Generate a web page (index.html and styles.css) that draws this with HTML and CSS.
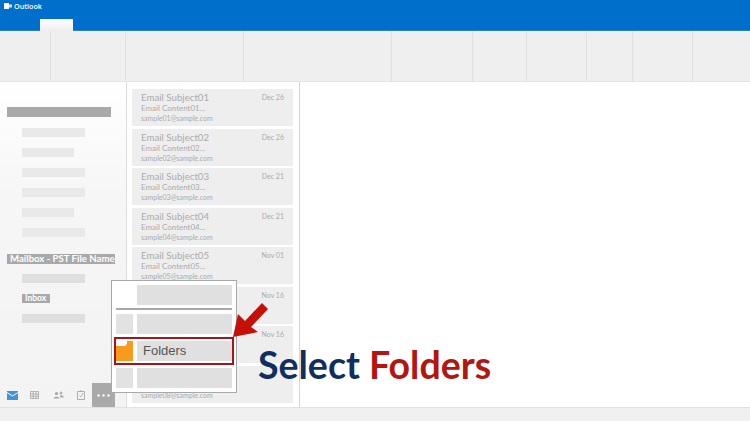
FILE: index.html
```html
<!DOCTYPE html>
<html lang="en">

<head>
    <meta charset="UTF-8">
    <title>Outlook - Select Folders</title>
    <link rel="stylesheet" href="styles.css">
</head>

<body>
    <div class="app">
        <header class="topbar">
            <div class="brand">
                <svg class="brand-icon" width="8" height="8" viewBox="0 0 8 8">
                    <rect x="0" y="1" width="5" height="6" fill="#fff" />
                    <rect x="5" y="2.5" width="3" height="3" fill="#cfe3f5" />
                </svg>
                <span>Outlook</span>
            </div>
            <div class="tab"></div>
        </header>

        <div class="ribbon">
            <div class="ribbon-group w50"></div>
            <div class="ribbon-group w75"></div>
            <div class="ribbon-group w118"></div>
            <div class="ribbon-group w148"></div>
            <div class="ribbon-group w81"></div>
            <div class="ribbon-group w54"></div>
            <div class="ribbon-group w61"></div>
            <div class="ribbon-group w46"></div>
            <div class="ribbon-group w61"></div>
        </div>

        <main class="main">
            <aside class="sidebar">
                <div class="side-list">
                    <div class="side-head"></div>
                    <div class="side-item"></div>
                    <div class="side-item short"></div>
                    <div class="side-item"></div>
                    <div class="side-item"></div>
                    <div class="side-item short"></div>
                    <div class="side-item"></div>
                    <div class="side-label">Mailbox - PST File Name</div>
                    <div class="side-item dark"></div>
                    <div class="side-inbox">Inbox</div>
                    <div class="side-item dark"></div>
                </div>
                <nav class="side-nav">
                    <svg class="nav-icon" width="11" height="9" viewBox="0 0 11 9">
                        <rect width="11" height="9" fill="#3f94dc" />
                        <path d="M0 1.5 L5.5 5 L11 1.5" fill="none" stroke="#fff" stroke-width="1" />
                    </svg>
                    <svg class="nav-icon" width="9" height="8" viewBox="0 0 9 8">
                        <path d="M0.5 0.5H8.5V7.5H0.5ZM0 3H9M0 5.2H9M3.2 1V8M6 1V8" fill="none" stroke="#a5a5a5" stroke-width="0.8" />
                    </svg>
                    <svg class="nav-icon" width="11" height="8" viewBox="0 0 11 8">
                        <circle cx="3.5" cy="2.5" r="1.6" fill="#a5a5a5" />
                        <circle cx="8" cy="2" r="1.5" fill="#b5b5b5" />
                        <path d="M0.5 7.5C0.8 5 6.2 5 6.5 7.5ZM7 4.5C8.5 4 10.5 4.5 10.8 6.5H7.5Z" fill="#a5a5a5" />
                    </svg>
                    <svg class="nav-icon" width="8" height="10" viewBox="0 0 8 10">
                        <path d="M0.5 1.5H7.5V9.5H0.5Z" fill="none" stroke="#a5a5a5" stroke-width="0.9" />
                        <path d="M2.5 5.5L3.7 6.8L6.2 3M3 1H5" fill="none" stroke="#a5a5a5" stroke-width="0.9" />
                    </svg>
                    <div class="nav-more">
                        <svg width="13" height="3" viewBox="0 0 13 3">
                            <circle cx="1.5" cy="1.5" r="1.2" fill="#fff" />
                            <circle cx="6.5" cy="1.5" r="1.2" fill="#fff" />
                            <circle cx="11.5" cy="1.5" r="1.2" fill="#fff" />
                        </svg>
                    </div>
                </nav>
            </aside>

            <section class="mail-list">
                <div class="mail-card">
                    <div class="mail-top"><span class="subject">Email Subject01</span><span class="date">Dec 26</span></div>
                    <div class="content">Email Content01...</div>
                    <div class="sender">sample01@sample.com</div>
                </div>
                <div class="mail-card">
                    <div class="mail-top"><span class="subject">Email Subject02</span><span class="date">Dec 26</span></div>
                    <div class="content">Email Content02...</div>
                    <div class="sender">sample02@sample.com</div>
                </div>
                <div class="mail-card">
                    <div class="mail-top"><span class="subject">Email Subject03</span><span class="date">Dec 21</span></div>
                    <div class="content">Email Content03...</div>
                    <div class="sender">sample03@sample.com</div>
                </div>
                <div class="mail-card">
                    <div class="mail-top"><span class="subject">Email Subject04</span><span class="date">Dec 21</span></div>
                    <div class="content">Email Content04...</div>
                    <div class="sender">sample04@sample.com</div>
                </div>
                <div class="mail-card">
                    <div class="mail-top"><span class="subject">Email Subject05</span><span class="date">Nov 01</span></div>
                    <div class="content">Email Content05...</div>
                    <div class="sender">sample05@sample.com</div>
                </div>
                <div class="mail-card">
                    <div class="mail-top"><span class="subject"></span><span class="date">Nov 16</span></div>
                </div>
                <div class="mail-card">
                    <div class="mail-top"><span class="subject"></span><span class="date">Nov 16</span></div>
                </div>
                <div class="mail-card last">
                    <div class="sender">sample08@sample.com</div>
                </div>
            </section>

            <section class="reading"></section>
        </main>

        <footer class="statusbar"></footer>

        <!-- popup menu over the sidebar and list -->
        <div class="popup">
            <div class="popup-row first">
                <div class="popup-icon blank"></div>
                <div class="popup-text"></div>
            </div>
            <div class="popup-line"></div>
            <div class="popup-row">
                <div class="popup-icon"></div>
                <div class="popup-text"></div>
            </div>
            <div class="popup-row selected">
                <svg class="folder-icon" width="17" height="20" viewBox="0 0 17 20">
                    <path d="M0 0H17V20H0Z" fill="#f79a1e" />
                    <path d="M0 0H11V3L9 5H0Z" fill="#fff" />
                </svg>
                <div class="popup-text">Folders</div>
            </div>
            <div class="popup-row">
                <div class="popup-icon"></div>
                <div class="popup-text"></div>
            </div>
        </div>

        <svg class="arrow" width="40" height="40" viewBox="230 300 40 40">
            <polygon points="233,337 238,314 245,321 262,303 268,309 251,327 258,332" fill="#c50f07" />
        </svg>

        <div class="caption"><span class="blue">Select</span> <span class="red">Folders</span></div>
    </div>
</body>

</html>
```

FILE: styles.css
```css
* {
    box-sizing: border-box;
}

body {
    margin: 0;
    background-color: #fff;
    font-family: Lato, "Liberation Sans", sans-serif;
}

.app {
    position: relative;
    width: 750px;
    height: 421px;
    overflow: hidden;
    display: flex;
    flex-direction: column;
}

/* top bar */
.topbar {
    height: 31px;
    background-color: #006fcb;
    border-bottom: 1px solid #2b7fc0;
    position: relative;
    flex-shrink: 0;
}

.brand {
    display: flex;
    align-items: center;
    gap: 2px;
    padding: 1px 0 0 4px;
    color: #fff;
    font-family: "Open Sans", sans-serif;
    font-size: 7.2px;
    font-weight: 600;
    line-height: 10px;
}

.tab {
    position: absolute;
    left: 40px;
    top: 19px;
    width: 33px;
    height: 12px;
    background: linear-gradient(#fff, #eee);
}

/* ribbon */
.ribbon {
    height: 51px;
    display: flex;
    background-color: #efefef;
    border-bottom: 1px solid #e4e4e4;
    flex-shrink: 0;
}

.ribbon-group {
    border-right: 1px solid #e0e0e0;
}

.w50 { width: 51px; }
.w75 { width: 75px; }
.w118 { width: 118px; }
.w148 { width: 148px; }
.w81 { width: 81px; }
.w54 { width: 54px; }
.w61 { width: 60px; }
.w46 { width: 46px; }

/* main area */
.main {
    flex: 1;
    display: flex;
    min-height: 0;
}

.sidebar {
    width: 126px;
    background: linear-gradient(#fff, #f6f6f6 35%, #f3f3f3);
    display: flex;
    flex-direction: column;
    justify-content: space-between;
}

.side-list {
    padding: 25px 0 0 7px;
}

.side-head {
    width: 104px;
    height: 10px;
    background-color: #a9a9a9;
    margin-bottom: 11px;
}

.side-item {
    width: 63px;
    height: 9px;
    margin: 0 0 11px 15px;
    background-color: #e9e9e9;
}

.side-item.short {
    width: 52px;
}

.side-item.dark {
    background-color: #dfdfdf;
}

.side-label {
    width: 108px;
    height: 10px;
    margin: 17px 0 10px;
    padding-left: 3px;
    background-color: #a9a9a9;
    color: #fff;
    font-size: 9.6px;
    font-weight: 700;
    line-height: 10px;
    white-space: nowrap;
}

.side-inbox {
    width: 28px;
    height: 9px;
    margin: 0 0 11px 15px;
    padding-left: 3px;
    background-color: #a9a9a9;
    color: #fff;
    font-size: 8.5px;
    font-weight: 700;
    line-height: 9px;
}

.side-nav {
    height: 24px;
    display: flex;
    align-items: center;
    padding-left: 7px;
}

.nav-icon {
    flex-shrink: 0;
}

.nav-icon:nth-child(1) { margin-right: 12px; }
.nav-icon:nth-child(2) { margin-right: 14px; }
.nav-icon:nth-child(3) { margin-right: 13px; }
.nav-icon:nth-child(4) { margin-right: 7px; }

.nav-more {
    width: 23px;
    height: 24px;
    background-color: #a9a9a9;
    display: flex;
    align-items: center;
    justify-content: center;
}

/* email list */
.mail-list {
    width: 174px;
    height: 100%;
    padding: 7px 6px 0 5px;
    overflow: hidden;
    background-color: #fff;
    border-left: 1px solid #dcdcdc;
    border-right: 1px solid #d4d4d4;
}

.mail-card {
    height: 37px;
    margin-bottom: 2.5px;
    padding: 2px 9px 0;
    background-color: #eee;
    color: #ababab;
}

.mail-card.last {
    padding-top: 24px;
}

.mail-top {
    display: flex;
    justify-content: space-between;
    align-items: center;
    height: 12px;
    line-height: 12px;
    margin-bottom: 1px;
}

.subject {
    font-size: 9.7px;
}

.date {
    font-size: 7px;
}

.content {
    font-size: 8px;
    line-height: 9px;
}

.sender {
    font-size: 7px;
    line-height: 10px;
}

.reading {
    flex: 1;
}

.statusbar {
    height: 14px;
    background-color: #f0f0f0;
    border-top: 1px solid #e2e2e2;
    flex-shrink: 0;
}

/* popup menu */
.popup {
    position: absolute;
    left: 111px;
    top: 280px;
    width: 126px;
    height: 113px;
    padding: 4px 4px 0;
    background-color: #fff;
    border: 1px solid #a8a8a8;
}

.popup-row {
    display: flex;
    gap: 4px;
    height: 20px;
    margin-bottom: 3px;
}

.popup-icon {
    width: 17px;
    background-color: #e2e2e2;
}

.popup-icon.blank {
    background-color: #fff;
}

.popup-text {
    flex: 1;
    background-color: #e0e0e0;
    color: #555;
    font-family: "Liberation Sans", sans-serif;
    font-size: 13px;
    line-height: 20px;
    padding-left: 6px;
}

.popup-line {
    height: 2px;
    margin-bottom: 4px;
    background-color: #a8a8a8;
}

.popup-row.selected {
    align-items: center;
    height: 28px;
    margin: 0 -2px 3px;
    padding: 2px 0 2px 0;
    border: 2px solid #a8131a;
}

.popup-row.selected .popup-text {
    height: 20px;
}

.folder-icon {
    flex-shrink: 0;
}

/* annotation */
.arrow {
    position: absolute;
    left: 230px;
    top: 300px;
}

.caption {
    position: absolute;
    left: 258px;
    top: 342px;
    font-size: 37.5px;
    font-weight: 700;
    line-height: 46px;
    white-space: nowrap;
}

.blue {
    color: #0f2f63;
}

.red {
    color: #b3150f;
}
```
